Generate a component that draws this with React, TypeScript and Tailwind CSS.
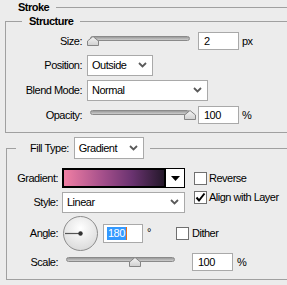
import type { ReactNode } from 'react'

function Chevron() {
  return (
    <svg width="9" height="6" viewBox="0 0 9 6" className="shrink-0">
      <path d="M1 1 L4.5 4.5 L8 1" fill="none" stroke="#5a5a5a" strokeWidth="1.8" />
    </svg>
  )
}

function Select({ value, className }: { value: string; className: string }) {
  return (
    <div
      className={`flex h-[21px] items-center justify-between border border-[#a9a9a9] bg-white pl-[4px] pr-[5px] ${className}`}
    >
      <span>{value}</span>
      <Chevron />
    </div>
  )
}

function Field({ className, children }: { className: string; children: ReactNode }) {
  return (
    <div className={`flex h-[18px] items-center border border-[#a9a9a9] bg-white pl-[5px] ${className}`}>
      {children}
    </div>
  )
}

function Thumb({ className }: { className: string }) {
  return (
    <svg width="12" height="10" viewBox="0 0 12 10" className={`absolute top-0 ${className}`}>
      <defs>
        <linearGradient id="thumbFill" x1="0" y1="0" x2="0" y2="1">
          <stop offset="0" stopColor="#f6f6f6" />
          <stop offset="1" stopColor="#cfcfcf" />
        </linearGradient>
      </defs>
      <path d="M0.5 9.5 V5 L6 0.5 L11.5 5 V9.5 Z" fill="url(#thumbFill)" stroke="#858585" />
    </svg>
  )
}

function Slider({ className, thumb }: { className: string; thumb: string }) {
  return (
    <div className={`relative h-[10px] ${className}`}>
      <div className="absolute left-[3px] right-[5px] top-0 h-[5px] rounded-full border border-[#8a8a8a] bg-gradient-to-b from-[#9a9a9a] to-[#cdcdcd]" />
      <Thumb className={thumb} />
    </div>
  )
}

function Checkbox({ checked }: { checked?: boolean }) {
  return (
    <div className="flex h-[13px] w-[13px] shrink-0 items-center justify-center border border-[#707070] bg-white">
      {checked && (
        <svg width="11" height="11" viewBox="0 0 11 11">
          <path d="M1.5 5.5 L4 8.5 L9.5 1.5" fill="none" stroke="#000" strokeWidth="2" />
        </svg>
      )}
    </div>
  )
}

function Dial() {
  return (
    <svg width="35" height="35" viewBox="0 0 35 35" className="shrink-0">
      <defs>
        <radialGradient id="dialFill" cx="0.5" cy="0.35" r="0.7">
          <stop offset="0" stopColor="#ffffff" />
          <stop offset="1" stopColor="#d8d8d8" />
        </radialGradient>
      </defs>
      <circle cx="17.5" cy="17.5" r="17" fill="url(#dialFill)" stroke="#8c8c8c" />
      <line x1="2" y1="17.5" x2="17.5" y2="17.5" stroke="#555" strokeWidth="1.2" />
      <circle cx="17.5" cy="17.5" r="2.2" fill="#333" />
    </svg>
  )
}

export default function App() {
  return (
    <div className="h-[285px] w-[287px] overflow-hidden bg-[#ececec] font-['Liberation_Sans',Arial,sans-serif] text-[11px] leading-[13px] tracking-[-0.5px] text-black">
      <div className="flex h-[14px] items-center pl-[18px]">
        <span className="font-bold">Stroke</span>
        <div className="ml-[7px] h-px flex-1 bg-[#a0a0a0]" />
      </div>

      <fieldset className="ml-[5px] w-[300px] border border-[#a0a0a0] pb-[6px]">
        <legend className="ml-[16px] px-[7px] font-bold leading-[14px]">Structure</legend>

        <div className="mt-[2px] flex h-[22px] items-center">
          <div className="w-[76px] text-right">Size:</div>
          <Slider className="ml-[5px] w-[108px]" thumb="left-0" />
          <Field className="ml-[3px] w-[41px]">2</Field>
          <span className="ml-[3px]">px</span>
        </div>

        <div className="mt-[2px] flex h-[22px] items-center">
          <div className="w-[76px] text-right">Position:</div>
          <Select value="Outside" className="ml-[5px] w-[66px]" />
        </div>

        <div className="mt-[3px] flex h-[22px] items-center">
          <div className="w-[76px] text-right">Blend Mode:</div>
          <Select value="Normal" className="ml-[5px] w-[121px]" />
        </div>

        <div className="mt-[3px] flex h-[22px] items-center">
          <div className="w-[76px] text-right">Opacity:</div>
          <Slider className="ml-[5px] w-[108px]" thumb="left-[97px]" />
          <Field className="ml-[3px] w-[41px]">100</Field>
          <span className="ml-[3px]">%</span>
        </div>
      </fieldset>

      <fieldset className="ml-[6px] mt-[4px] w-[300px] border border-[#a0a0a0] pb-[8px]">
        <legend className="ml-[9px] flex items-center pl-[14px] pr-[6px]">
          <span>Fill Type:</span>
          <Select value="Gradient" className="ml-[5px] h-[22px] w-[70px]" />
        </legend>

        <div className="mt-[8px] flex h-[22px] items-center">
          <div className="w-[51px] text-right">Gradient:</div>
          <div className="ml-[4px] flex h-[20px] w-[123px]">
            <div className="flex-1 border-2 border-black bg-[linear-gradient(to_right,#f07fa4,#a24e8a_40%,#6a3370_68%,#24182a)]" />
            <div className="flex w-[19px] items-center justify-center border border-l-0 border-black bg-white">
              <svg width="9" height="5" viewBox="0 0 9 5">
                <path d="M0 0 H9 L4.5 5 Z" fill="#000" />
              </svg>
            </div>
          </div>
          <div className="ml-[9px]">
            <Checkbox />
          </div>
          <span className="ml-[2px]">Reverse</span>
        </div>

        <div className="mt-[2px] flex h-[22px] items-center">
          <div className="w-[51px] text-right">Style:</div>
          <Select value="Linear" className="ml-[4px] w-[123px]" />
          <div className="ml-[9px] self-start">
            <Checkbox checked />
          </div>
          <span className="ml-[2px] self-start">Align with Layer</span>
        </div>

        <div className="mt-[2px] flex h-[36px] items-center">
          <div className="w-[51px] text-right">Angle:</div>
          <div className="ml-[5px]">
            <Dial />
          </div>
          <Field className="ml-[5px] h-[19px] w-[40px] !pl-[3px]">
            <span className="bg-[#3399ff] px-[1px] text-white">180</span>
            <span className="h-[13px] w-px bg-[#e07020]" />
          </Field>
          <span className="ml-[4px] w-[29px] self-start pt-[11px]">°</span>
          <Checkbox />
          <span className="ml-[3px]">Dither</span>
        </div>

        <div className="mt-[2px] flex h-[18px] items-center">
          <div className="w-[51px] text-right">Scale:</div>
          <Slider className="ml-[5px] w-[117px]" thumb="left-[66px]" />
          <Field className="ml-[12px] w-[41px]">100</Field>
          <span className="ml-[4px]">%</span>
        </div>
      </fieldset>
    </div>
  )
}
